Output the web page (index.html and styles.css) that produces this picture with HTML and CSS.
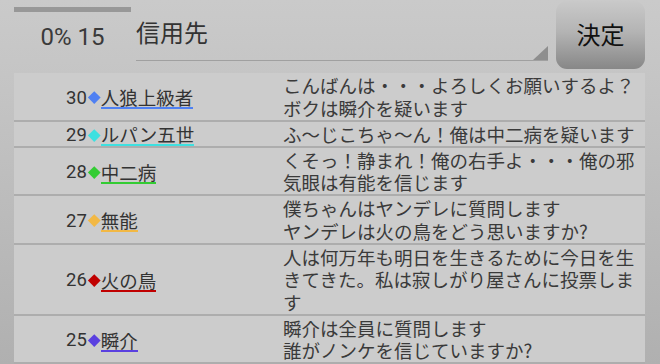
FILE: index.html
```html
<!DOCTYPE html>
<html lang="ja">
<head>
<meta charset="utf-8">
<title>投票</title>
<link rel="stylesheet" href="styles.css">
</head>
<body>
<div class="screen">
  <header class="top">
    <div class="prog">
      <div class="prog-bar"></div>
      <div class="prog-text">0% 15</div>
    </div>
    <div class="spinner">
      <span class="spinner-text">信用先</span>
      <span class="spinner-tri"></span>
    </div>
    <button class="decide">決定</button>
  </header>
  <div class="list">
    <div class="row">
      <div class="who"><span class="num">30</span><span class="dia c-blue"></span><span class="name u-blue">人狼上級者</span></div>
      <div class="msg">こんばんは・・・よろしくお願いするよ？<br>ボクは瞬介を疑います</div>
    </div>
    <div class="row">
      <div class="who"><span class="num">29</span><span class="dia c-cyan"></span><span class="name u-cyan">ルパン五世</span></div>
      <div class="msg">ふ〜じこちゃ〜ん！俺は中二病を疑います</div>
    </div>
    <div class="row">
      <div class="who"><span class="num">28</span><span class="dia c-green"></span><span class="name u-green">中二病</span></div>
      <div class="msg">くそっ！静まれ！俺の右手よ・・・俺の邪気眼は有能を信じます</div>
    </div>
    <div class="row">
      <div class="who"><span class="num">27</span><span class="dia c-orange"></span><span class="name u-orange">無能</span></div>
      <div class="msg">僕ちゃんはヤンデレに質問します<br>ヤンデレは火の鳥をどう思いますか?</div>
    </div>
    <div class="row">
      <div class="who"><span class="num">26</span><span class="dia c-red"></span><span class="name u-red">火の鳥</span></div>
      <div class="msg">人は何万年も明日を生きるために今日を生きてきた。私は寂しがり屋さんに投票します</div>
    </div>
    <div class="row">
      <div class="who"><span class="num">25</span><span class="dia c-indigo"></span><span class="name u-indigo">瞬介</span></div>
      <div class="msg">瞬介は全員に質問します<br>誰がノンケを信じていますか?</div>
    </div>
  </div>
</div>
</body>
</html>
```

FILE: styles.css
```css
html, body {
  margin: 0;
  padding: 0;
}
body {
  width: 660px;
  height: 364px;
  overflow: hidden;
  background: linear-gradient(#cacaca 0%, #c4c4c4 25%, #b0b0b0 100%);
  font-family: Roboto, "Noto Sans CJK JP", sans-serif;
  color: #333;
}
.screen {
  padding: 0 15px 0 14px;
}
.top {
  display: flex;
  height: 73px;
}
.prog {
  width: 117px;
  display: flex;
  flex-direction: column;
}
.prog-bar {
  margin-top: 7px;
  height: 5px;
  background: #989898;
}
.prog-text {
  margin-top: 11px;
  font-size: 24px;
  line-height: 28px;
  text-align: center;
  color: #3a3a3a;
}
.spinner {
  margin-left: 5px;
  width: 412px;
  height: 61px;
  border-bottom: 1.5px solid #a0a0a0;
  position: relative;
  box-sizing: border-box;
}
.spinner-text {
  display: block;
  padding-top: 19px;
  padding-left: 0;
  font-family: "Noto Sans CJK JP", sans-serif;
  font-size: 24px;
  line-height: 26px;
  color: #333;
}
.spinner-tri {
  position: absolute;
  right: 0;
  bottom: 0;
  width: 0;
  height: 0;
  border-left: 15px solid transparent;
  border-bottom: 14px solid #8e8e8e;
}
.decide {
  margin: 1px 0 0 8px;
  width: 89px;
  height: 68px;
  border: none;
  border-radius: 11px;
  background: linear-gradient(#c9c9c9 0%, #b4b4b4 45%, #878787 100%);
  font-family: "Noto Sans CJK JP", sans-serif;
  font-size: 24px;
  line-height: 28px;
  color: #111;
  padding: 0 0 2px;
}
.list {
  background: #cccccc;
}
.row {
  display: grid;
  grid-template-columns: 269px 1fr;
  border-bottom: 2px solid #adadad;
  padding: 1px 0 0.5px;
}
.who {
  display: flex;
  align-items: center;
  padding-left: 52px;
  padding-top: 2px;
  font-size: 18.5px;
  color: #333;
}
.num {
  font-family: Roboto, sans-serif;
  line-height: 18px;
}
.dia {
  display: inline-block;
  width: 8.5px;
  height: 8.5px;
  transform: rotate(45deg);
  margin: 0 2px 0 3.5px;
}
.name {
  font-family: "Noto Sans CJK JP", sans-serif;
  line-height: 18px;
  padding-bottom: 1px;
  margin-bottom: -2px;
  border-bottom: 2.5px solid;
}
.msg {
  font-family: "Noto Sans CJK JP", sans-serif;
  font-size: 18.5px;
  line-height: 22.5px;
  color: #3a3a3a;
  padding-right: 2px;
}
.c-blue { background: #4f80f2; }
.c-cyan { background: #3ee0e0; }
.c-green { background: #33cc33; }
.c-orange { background: #f2b844; }
.c-red { background: #c00000; }
.c-indigo { background: #5a40e0; }
.u-blue { border-color: #4f80f2; }
.u-cyan { border-color: #3ee0e0; }
.u-green { border-color: #33cc33; }
.u-orange { border-color: #f2b844; }
.u-red { border-color: #c00000; }
.u-indigo { border-color: #5a40e0; }
```
